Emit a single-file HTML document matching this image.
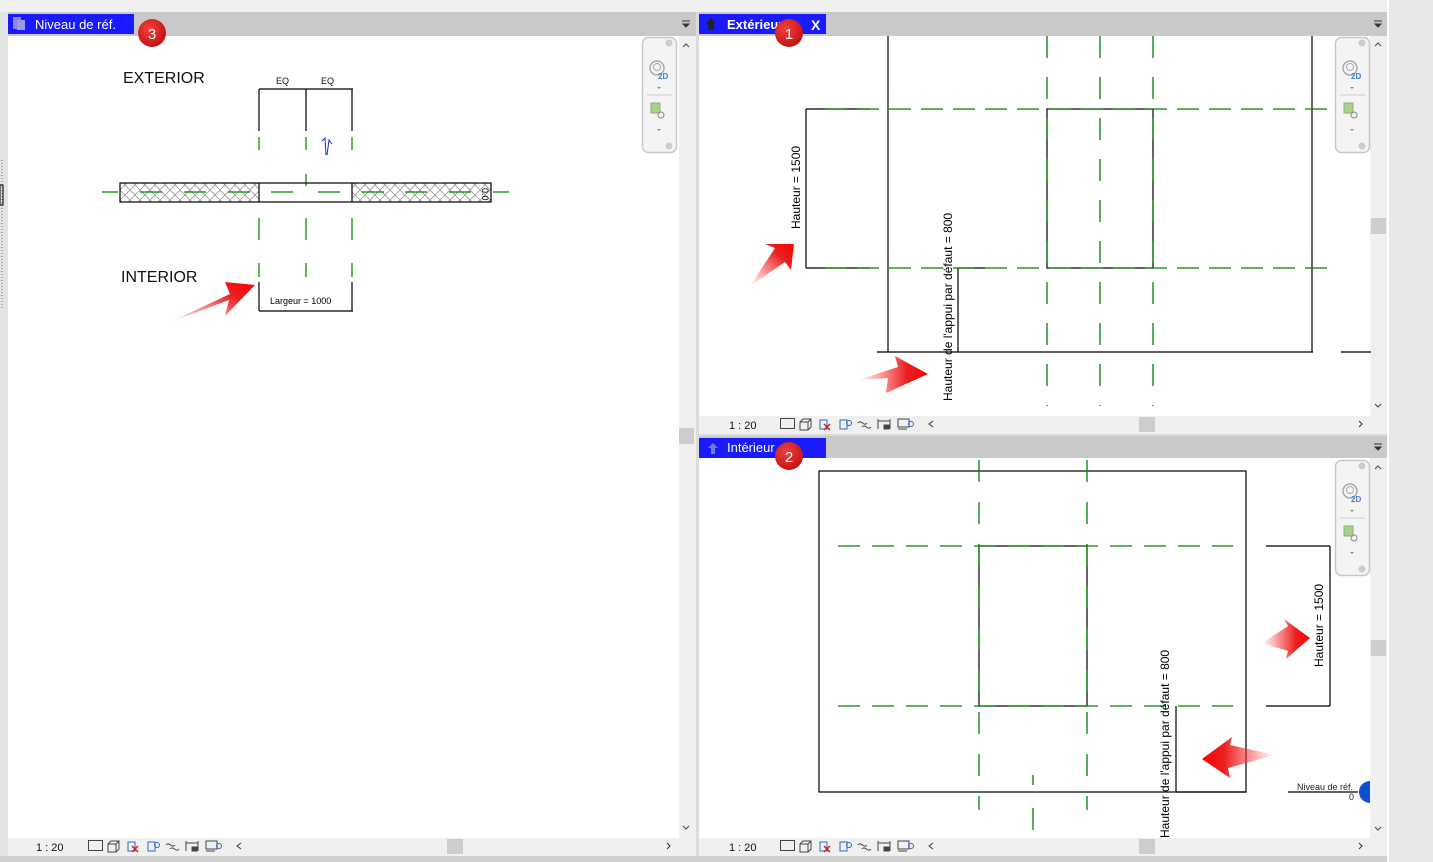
<!DOCTYPE html>
<html><head><meta charset="utf-8"><style>
html,body{margin:0;padding:0;width:1433px;height:862px;overflow:hidden;background:#f0f0f0;font-family:"Liberation Sans",sans-serif}
svg{position:absolute;left:0;top:0}
</style></head><body>
<svg width="1433" height="862" viewBox="0 0 1433 862" xmlns="http://www.w3.org/2000/svg" font-family="Liberation Sans, sans-serif">
<defs>
<pattern id="hatch" width="10" height="10" patternUnits="userSpaceOnUse">
<path d="M0 0L10 10M10 0L0 10" stroke="#999" stroke-width="0.8"/>
</pattern>
<linearGradient id="ar1" x1="0" y1="1" x2="1" y2="0"><stop offset="0" stop-color="#ff3030" stop-opacity="0"/><stop offset="0.7" stop-color="#e82020"/><stop offset="1" stop-color="#ff0000"/></linearGradient>
<linearGradient id="ar2" x1="0" y1="0" x2="1" y2="0"><stop offset="0" stop-color="#ff3030" stop-opacity="0"/><stop offset="0.7" stop-color="#e82020"/><stop offset="1" stop-color="#ff0000"/></linearGradient>
<linearGradient id="ar3" x1="1" y1="0" x2="0" y2="0"><stop offset="0" stop-color="#ff3030" stop-opacity="0"/><stop offset="0.7" stop-color="#e82020"/><stop offset="1" stop-color="#ff0000"/></linearGradient>
<radialGradient id="badge" cx="0.4" cy="0.35" r="0.7"><stop offset="0" stop-color="#f04040"/><stop offset="1" stop-color="#c01010"/></radialGradient>
<g id="nav">
<rect x="0.5" y="0.5" width="34" height="115" rx="6" fill="#f4f4f4" stroke="#c8c8c8" stroke-width="1.5"/>
<circle cx="27" cy="6" r="3.5" fill="#ccc"/>
<circle cx="15" cy="31" r="7" fill="none" stroke="#aaa" stroke-width="1.5"/>
<circle cx="15" cy="30" r="3.5" fill="none" stroke="#aaa"/>
<text x="16" y="42" font-size="8" fill="#4a7fc8" font-weight="bold">2D</text>
<path d="M15 50l2 2 2-2z" fill="#888"/>
<line x1="5" y1="58" x2="30" y2="58" stroke="#ccc"/>
<rect x="9" y="66" width="9" height="10" fill="#a8d090" stroke="#8ab070"/>
<circle cx="19" cy="78" r="3" fill="none" stroke="#888"/>
<path d="M15 92l2 2 2-2z" fill="#888"/>
<circle cx="27" cy="109" r="3.5" fill="#ccc"/>
</g>
<g id="sicons" fill="none" stroke="#444">
<rect x="0.5" y="0.5" width="14" height="10"/>
<path d="M20 4h8v8h-8zM20 4l3-3h8v8l-3 3M28 4l3-3"/>
<path d="M40 2h7v9h-7z" stroke="#3068c0"/><path d="M44 6l6 6M50 6l-6 6" stroke="#d02020" stroke-width="1.5"/>
<path d="M60 2h7v9h-7z" stroke="#3068c0"/><circle cx="69" cy="5" r="2.5" stroke="#3068c0"/>
<path d="M78 5c3-4 6 4 9 0M82 9c3-4 6 4 9 0"/>
<path d="M98 1v10M110 1v10M98 3h12"/><rect x="104" y="7" width="5" height="4" fill="#444"/>
<rect x="118" y="1" width="11" height="8"/><path d="M118 11h9"/><circle cx="131" cy="6" r="2.5" stroke="#3068c0"/>
<path d="M153 3l-4 3 4 3" stroke="#333"/>
</g>
</defs>

<!-- left panel -->
<rect x="0" y="12" width="8" height="850" fill="#e4e4e4"/>
<line x1="2" y1="160" x2="2" y2="310" stroke="#777" stroke-dasharray="1 2"/>
<rect x="0" y="185" width="3" height="20" fill="none" stroke="#000"/>
<rect x="8" y="12" width="690" height="24" fill="#c9c9c9"/>
<rect x="8" y="14" width="126" height="20" fill="#1a1aff"/>
<rect x="13" y="17" width="8" height="12" fill="#8888dd"/><rect x="17" y="20" width="8" height="10" fill="#9a9ae8"/>
<text x="35" y="29" font-size="13" fill="#fff">Niveau de réf.</text>
<path d="M682 21h8M683 24l3 3 3-3z" stroke="#333" fill="#333"/>
<rect x="8" y="36" width="671" height="802" fill="#fff"/>
<rect x="679" y="36" width="17" height="802" fill="#f0f0f0"/>
<rect x="679" y="428" width="15" height="16" fill="#cdcdcd"/>
<path d="M683 47l3-3 3 3M683 826l3 3 3-3" stroke="#444" fill="none"/>
<use href="#nav" x="642" y="37"/>
<rect x="8" y="838" width="688" height="18" fill="#f0f0f0"/>
<text x="36" y="851" font-size="11" fill="#111">1 : 20</text>
<use href="#sicons" x="88" y="840"/>
<rect x="447" y="839" width="16" height="15" fill="#cdcdcd"/>
<path d="M667 843l3 3-3 3" stroke="#333" fill="none"/>
<rect x="696" y="12" width="3" height="850" fill="#dcdcdc"/>

<!-- left drawing -->
<text x="123" y="83" font-size="16" fill="#111">EXTERIOR</text>
<text x="121" y="282" font-size="16" fill="#111">INTERIOR</text>
<text x="276" y="84" font-size="9" fill="#111">EQ</text>
<text x="321" y="84" font-size="9" fill="#111">EQ</text>
<g stroke="#000" stroke-width="1.2" fill="none">
<path d="M259 89h94M259 89v42M306 89v42M352 89v42"/>
<path d="M259 282v29M352 282v29M259 311h94"/>
</g>
<g stroke="#008000" stroke-width="1.2">
<path d="M259 137v13M306 137v13M352 137v13M259 218v22M306 218v22M352 218v22M259 263v14M306 263v14M352 263v14M306 174v12"/>
</g>
<path d="M322 141l3 -3 1 17M327 155l2-15 3 4" stroke="#1030e0" fill="none"/>
<rect x="120" y="183" width="139" height="19" fill="url(#hatch)"/>
<rect x="352" y="183" width="139" height="19" fill="url(#hatch)"/>
<rect x="120" y="183" width="371" height="19" fill="none" stroke="#000" stroke-width="1.2"/>
<path d="M259 183v19M352 183v19" stroke="#000" stroke-width="1.2"/>
<path d="M102 192h16M140 192h22M184 192h22M228 192h22M271 192h22M318 192h22M362 192h22M405 192h22M449 192h22M493 192h16" stroke="#008000" stroke-width="1.2"/>
<text x="466" y="180" font-size="9" transform="rotate(90 470 192)" fill="#000">0.0</text>
<text x="270" y="304" font-size="9" fill="#000">Largeur = 1000</text>
<polygon points="168,323 229,300 225,316 255,285 225,282 230,294" fill="url(#ar1)"/>
<circle cx="152" cy="33" r="14" fill="url(#badge)"/>
<text x="152" y="39" font-size="15" fill="#fff" text-anchor="middle">3</text>

<!-- right top panel -->
<rect x="699" y="12" width="688" height="24" fill="#c9c9c9"/>
<rect x="699" y="14" width="127" height="20" fill="#1a1aff"/>
<path d="M708 30v-7h-2l5-5 5 5h-2v7z" fill="#222"/>
<text x="727" y="29" font-size="13" fill="#fff" font-weight="bold">Extérieur</text>
<text x="811" y="30" font-size="14" fill="#fff" font-weight="bold">X</text>
<path d="M1374 21h8M1375 24l3 3 3-3z" stroke="#333" fill="#333"/>
<rect x="699" y="36" width="671" height="380" fill="#fff"/>
<rect x="1370" y="36" width="17" height="380" fill="#f0f0f0"/>
<rect x="1371" y="218" width="15" height="16" fill="#cdcdcd"/>
<path d="M1375 46l3-3 3 3M1375 404l3 3 3-3" stroke="#444" fill="none"/>
<use href="#nav" x="1335" y="37"/>
<rect x="699" y="416" width="688" height="18" fill="#f0f0f0"/>
<text x="729" y="429" font-size="11" fill="#111">1 : 20</text>
<use href="#sicons" x="780" y="418"/>
<rect x="1139" y="417" width="16" height="15" fill="#cdcdcd"/>
<path d="M1359 421l3 3-3 3" stroke="#333" fill="none"/>

<g stroke="#000" stroke-width="1.2" fill="none">
<path d="M888 36v316M1312 36v316M877 352h436M1341 352h30"/>
<path d="M806 109h64M806 268h64M806 109v159"/>
<rect x="1047" y="109" width="106" height="159"/>
<path d="M958 268v84M958 268h27"/>
</g>
<g stroke="#008000" stroke-width="1.3" fill="none" stroke-dasharray="22 10">
<path d="M1047 36v370M1100 36v370M1153 36v370" stroke-dasharray="22 19"/>
<path d="M825 109h510M825 268h510" stroke-dasharray="22 10"/>
</g>
<text font-size="12" fill="#000" transform="translate(800 229) rotate(-90)">Hauteur = 1500</text>
<text font-size="12" fill="#000" transform="translate(952 401) rotate(-90)">Hauteur de l'appui par défaut = 800</text>
<polygon points="750,286 785,262 791,270 794,244 765,244 775,248" fill="url(#ar1)"/>
<polygon points="858,380 888,378 886,393 928,374 895,356 898,367" fill="url(#ar2)"/>
<circle cx="789" cy="33" r="14" fill="url(#badge)"/>
<text x="789" y="39" font-size="15" fill="#fff" text-anchor="middle">1</text>

<!-- right bottom panel -->
<rect x="699" y="434" width="688" height="2" fill="#dcdcdc"/>
<rect x="699" y="436" width="688" height="22" fill="#c9c9c9"/>
<rect x="699" y="438" width="127" height="20" fill="#1a1aff"/>
<path d="M711 454v-6h-3l5-5 5 5h-3v6z" fill="#7777cc"/>
<text x="727" y="452" font-size="13" fill="#fff">Intérieur</text>
<path d="M1374 444h8M1375 447l3 3 3-3z" stroke="#333" fill="#333"/>
<rect x="699" y="458" width="671" height="380" fill="#fff"/>
<rect x="1370" y="458" width="17" height="380" fill="#f0f0f0"/>
<rect x="1371" y="640" width="15" height="16" fill="#cdcdcd"/>
<path d="M1375 469l3-3 3 3M1375 827l3 3 3-3" stroke="#444" fill="none"/>
<use href="#nav" x="1335" y="460"/>
<rect x="699" y="838" width="688" height="18" fill="#f0f0f0"/>
<text x="729" y="851" font-size="11" fill="#111">1 : 20</text>
<use href="#sicons" x="780" y="840"/>
<rect x="1139" y="839" width="16" height="15" fill="#cdcdcd"/>
<path d="M1359 843l3 3-3 3" stroke="#333" fill="none"/>

<g stroke="#000" stroke-width="1.2" fill="none">
<rect x="819" y="471" width="427" height="321"/>
<rect x="979" y="546" width="108" height="160"/>
<path d="M1266 546h64M1266 706h64M1330 546v160"/>
<path d="M1176 706v86M1176 792h70M1288 792h70"/>
</g>
<g stroke="#008000" stroke-width="1.3" fill="none">
<path d="M979 460v350M1087 460v350" stroke-dasharray="22 20"/>
<path d="M838 546h395M838 706h395" stroke-dasharray="22 12"/>
<path d="M1033 775v10M1033 808v22"/>
</g>
<text font-size="12" fill="#000" transform="translate(1323 667) rotate(-90)">Hauteur = 1500</text>
<text font-size="12" fill="#000" transform="translate(1169 838) rotate(-90)">Hauteur de l'appui par défaut = 800</text>
<text x="1297" y="790" font-size="9" fill="#222">Niveau de réf.</text>
<text x="1349" y="800" font-size="9" fill="#222">0</text>
<path d="M1370 781a11 11 0 0 0 0 22z" fill="#1050d0" transform="translate(0 0)"/>
<polygon points="1262,643 1288,626 1284,619 1310,638 1286,659 1288,651" fill="url(#ar2)"/>
<polygon points="1275,755 1230,745 1232,737 1202,759 1230,778 1228,768" fill="url(#ar3)"/>
<circle cx="789" cy="456" r="14" fill="url(#badge)"/>
<text x="789" y="462" font-size="15" fill="#fff" text-anchor="middle">2</text>

<!-- right strip -->
<rect x="1387" y="0" width="46" height="862" fill="#e8e8e8"/>
<rect x="1387" y="0" width="2" height="862" fill="#fff"/>
<rect x="0" y="856" width="1387" height="6" fill="#d0d0d0"/>
</svg>
</body></html>
